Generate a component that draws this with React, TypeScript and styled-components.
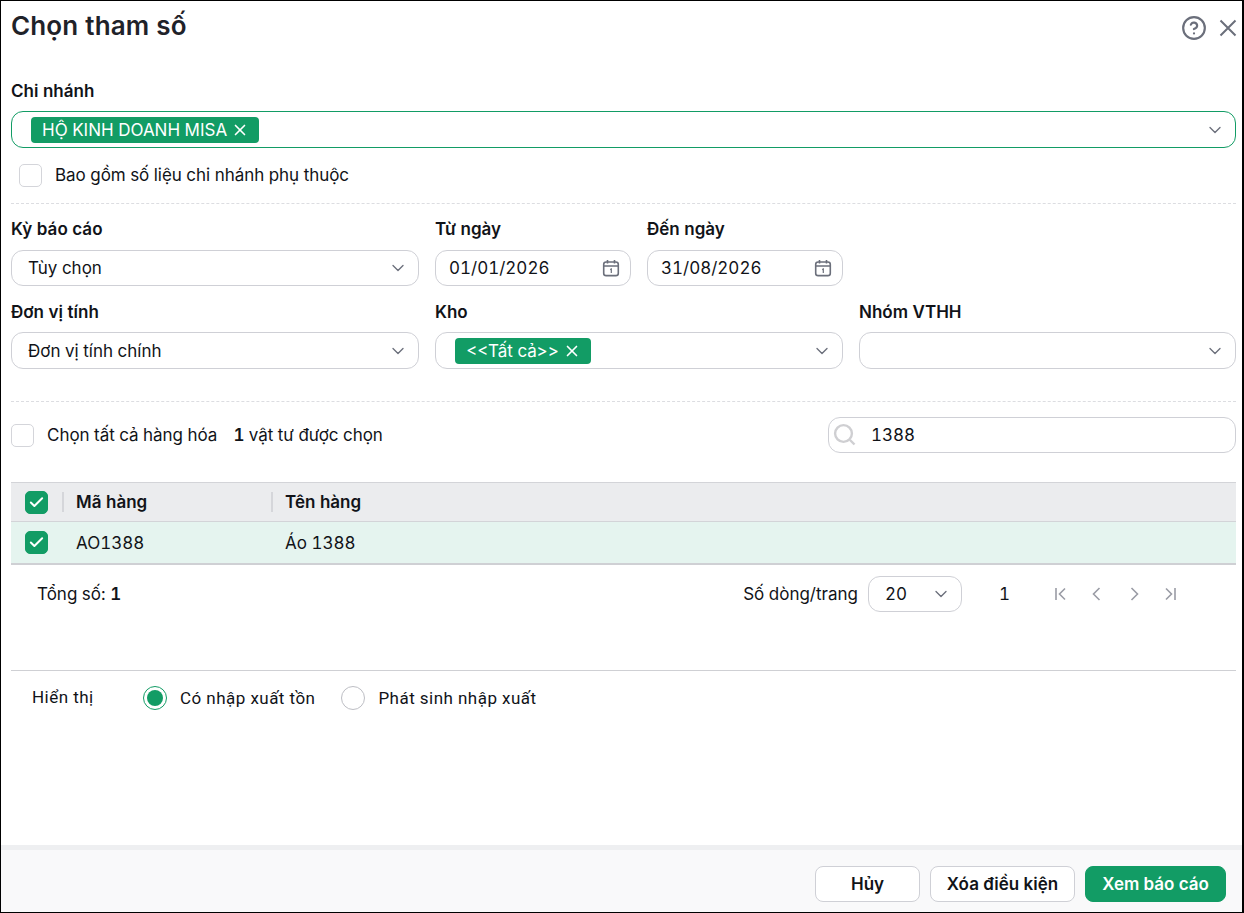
import React from "react"
import styled, { createGlobalStyle } from "styled-components"
import { Check, ChevronDown, CircleHelp, X } from "lucide-react"

const GREEN = "#129c65"

const GlobalStyle = createGlobalStyle`
html, body {
  margin: 0;
  padding: 0;
  background: #fff;
}
body {
  font-family: Inter, "Noto Sans", sans-serif;
  font-size: 17px;
  font-variant-numeric: tabular-nums;
  color: #111318;
}
* { box-sizing: border-box; }
`

const Dialog = styled.div`
  width: 1244px;
  height: 913px;
  display: flex;
  flex-direction: column;
  background: #fff;
  border-style: solid;
  border-color: #000;
  border-width: 1px 2px 1px 1px;
  overflow: hidden;
`

const Header = styled.header`
  height: 48px;
  display: flex;
  align-items: center;
  justify-content: space-between;
  padding: 2px 2px 0 10px;
  flex: none;
`

const Title = styled.h1`
  margin: 0;
  font-size: 26px;
  font-weight: 600;
  letter-spacing: 0.1px;
  color: #1f2229;
  line-height: 46px;
`

const HeaderIcons = styled.div`
  display: flex;
  align-items: center;
  gap: 9px;
  color: #6b6f7b;
  padding-top: 4px;
`

const Body = styled.main`
  flex: 1;
  padding: 0 6px 0 10px;
  display: flex;
  flex-direction: column;
`

const FieldLabel = styled.label<{ $gap?: number }>`
  display: block;
  font-size: 17px;
  font-weight: 600;
  line-height: 20px;
  height: 20px;
  margin-bottom: ${p => p.$gap ?? 10}px;
  color: #111318;
`

const BranchBlock = styled.section`
  padding-top: 32px;
`

const SelectBox = styled.div<{ $active?: boolean; $pad?: number; $h?: number }>`
  height: ${p => p.$h ?? 37}px;
  display: flex;
  align-items: center;
  justify-content: space-between;
  padding: 0 10px 0 ${p => p.$pad ?? 16}px;
  border: 1px solid ${p => (p.$active ? GREEN : "#cfd0d6")};
  border-radius: 12px;
  background: #fff;
  font-size: 17px;
  color: #6b6f7b;
`

const SelectValue = styled.span`
  color: #111318;
`

const Tag = styled.span`
  display: inline-flex;
  align-items: center;
  gap: 4px;
  height: 26px;
  padding: 0 10px 0 11px;
  background: ${GREEN};
  color: #fff;
  border-radius: 4px;
  font-size: 17px;
  white-space: nowrap;
`

const CheckRow = styled.div<{ $indent?: number }>`
  display: flex;
  align-items: center;
  gap: 13px;
  padding-left: ${p => p.$indent ?? 0}px;
  font-size: 17px;
  line-height: 24px;
  letter-spacing: -0.04px;
`

const BranchOption = styled(CheckRow)`
  margin: 15px 0 16px;
`

const CheckBox = styled.span<{ $checked?: boolean }>`
  width: 23px;
  height: 23px;
  flex: none;
  display: inline-flex;
  align-items: center;
  justify-content: center;
  border-radius: 5px;
  border: 1px solid ${p => (p.$checked ? GREEN : "#d4d5da")};
  background: ${p => (p.$checked ? GREEN : "#fff")};
  color: #fff;
`

const DashedLine = styled.hr`
  margin: 0;
  border: 0;
  border-top: 1px dashed #dcdde1;
`

const ParamGrid = styled.section`
  display: grid;
  grid-template-columns: 408px 408px 377px;
  column-gap: 16px;
  row-gap: 16px;
  padding: 15px 0 32px;
`

const DateGroup = styled.div`
  display: grid;
  grid-template-columns: 196px 196px;
  column-gap: 16px;
`

const DateInput = styled(SelectBox)`
  height: 36px;
  padding: 0 10px 0 13px;
`

const SelectRow = styled.section`
  display: flex;
  align-items: center;
  justify-content: space-between;
  margin: 15px 0 29px;
  height: 36px;
`

const SelectCount = styled.span`
  margin-left: 3px;
  strong { font-weight: 600; }
`

const SearchBox = styled.div`
  width: 408px;
  height: 36px;
  display: flex;
  align-items: center;
  gap: 14px;
  padding-left: 4px;
  border: 1px solid #cfd0d6;
  border-radius: 12px;
  font-size: 17px;
`

const Row = styled.div<{ $head?: boolean }>`
  display: grid;
  grid-template-columns: 65px 209px 1fr;
  align-items: center;
  height: ${p => (p.$head ? 39 : 44)}px;
  background: ${p => (p.$head ? "#ebecee" : "#e5f4ef")};
  border-top: 1px solid #d3d4d8;
  border-bottom: ${p => (p.$head ? "0" : "2px solid #cfd0d4")};
  font-weight: ${p => (p.$head ? 600 : 400)};
  font-size: 17px;
`

const Cell = styled.div<{ $divider?: boolean }>`
  height: 100%;
  display: flex;
  align-items: center;
  position: relative;
  ${p =>
    p.$divider &&
    `&::before {
      content: "";
      position: absolute;
      left: -14px;
      top: 9px;
      bottom: 9px;
      width: 2px;
      background: #d5d6da;
    }`}
`

const CheckCell = styled.div`
  height: 100%;
  display: flex;
  align-items: center;
  padding-left: 14px;
`

const Pager = styled.section`
  height: 58px;
  display: flex;
  align-items: center;
  padding: 0 56px 0 26px;
  font-size: 17px;
  strong { font-weight: 600; }
`

const PagerSize = styled.div`
  margin-left: auto;
  display: flex;
  align-items: center;
  gap: 10px;
`

const SizeSelect = styled.div`
  width: 94px;
  height: 36px;
  display: flex;
  align-items: center;
  justify-content: space-between;
  padding: 0 10px 0 16px;
  border: 1px solid #cfd0d6;
  border-radius: 12px;
  color: #6b6f7b;
`

const PageNum = styled.span`
  margin: 0 41px 0 37px;
`

const PagerIcons = styled.div`
  display: flex;
  align-items: center;
  gap: 19px;
  color: #9a9ca5;
`

const SolidLine = styled.hr`
  margin: 47px 0 0;
  border: 0;
  border-top: 1px solid #cfd0d4;
`

const DisplayRow = styled.section`
  display: flex;
  align-items: center;
  height: 54px;
  padding-left: 21px;
  font-family: Roboto, Inter, sans-serif;
  font-size: 17px;
  letter-spacing: 0.46px;
`

const DisplayLabel = styled.span`
  width: 111px;
  margin-top: -3px;
`

const Radio = styled.span<{ $on?: boolean }>`
  width: 24px;
  height: 24px;
  flex: none;
  border-radius: 50%;
  border: 1px solid ${p => (p.$on ? GREEN : "#bdbec4")};
  display: inline-flex;
  align-items: center;
  justify-content: center;
  margin-right: 13px;
  &::after {
    content: "";
    width: 16px;
    height: 16px;
    border-radius: 50%;
    background: ${p => (p.$on ? GREEN : "transparent")};
  }
`

const RadioText = styled.span`
  margin-right: 26px;
`

const Footer = styled.footer`
  height: 67px;
  flex: none;
  display: flex;
  justify-content: flex-end;
  gap: 10px;
  padding: 16px 16px 0 0;
  background: #f9f9fa;
  border-top: 5px solid #eeeff1;
`

const Button = styled.button<{ $primary?: boolean; $w: number }>`
  width: ${p => p.$w}px;
  height: 36px;
  border-radius: 8px;
  border: 1px solid ${p => (p.$primary ? GREEN : "#cfd0d6")};
  background: ${p => (p.$primary ? GREEN : "#fff")};
  color: ${p => (p.$primary ? "#fff" : "#111318")};
  font-family: inherit;
  font-size: 17px;
  font-weight: 600;
  padding: 0;
`

const PagerIcon = ({ d }: { d: string }) => (
  <svg width="18" height="18" viewBox="0 0 18 18" fill="none" stroke="currentColor" strokeWidth="1.6">
    <path d={d} />
  </svg>
)

const DateIcon = () => (
  <svg width="18" height="18" viewBox="0 0 18 18" fill="none" stroke="#6b6f7b" strokeWidth="1.6">
    <rect x="1.7" y="3" width="14.6" height="13.6" rx="2.4" />
    <path d="M1.7 7h14.6M5.5 1v3.4M12.5 1v3.4" />
    <path d="M8.2 10.6 9.3 10v4" strokeWidth="1.2" />
  </svg>
)

const SearchIcon = () => (
  <svg width="24" height="24" viewBox="0 0 24 24" fill="none" stroke="#cfcfd2" strokeWidth="2.4">
    <circle cx="10.5" cy="10.5" r="8.4" />
    <path d="M17 17l4.5 4.5" />
  </svg>
)

const CloseIcon = () => (
  <svg width="24" height="24" viewBox="0 0 24 24" fill="none" stroke="currentColor" strokeWidth="2">
    <path d="M4.5 4.5l15 15M19.5 4.5l-15 15" />
  </svg>
)

const Chevron = () => <ChevronDown size={20} strokeWidth={1.6} />

const TagClose = () => <X size={18} strokeWidth={2.2} />

const Tick = () => <Check size={17} strokeWidth={2.8} />

const App: React.FC = () => {
  return (
    <>
      <GlobalStyle />
      <Dialog>
        <Header>
          <Title>Chọn tham số</Title>
          <HeaderIcons>
            <CircleHelp size={26} strokeWidth={2} />
            <CloseIcon />
          </HeaderIcons>
        </Header>
        <Body>
          <BranchBlock>
            <FieldLabel>Chi nhánh</FieldLabel>
            <SelectBox $active $pad={19}>
              <Tag>
                HỘ KINH DOANH MISA
                <TagClose />
              </Tag>
              <Chevron />
            </SelectBox>
          </BranchBlock>
          <BranchOption $indent={8}>
            <CheckBox />
            Bao gồm số liệu chi nhánh phụ thuộc
          </BranchOption>
          <DashedLine />
          <ParamGrid>
            <div>
              <FieldLabel $gap={11}>Kỳ báo cáo</FieldLabel>
              <SelectBox $h={36}>
                <SelectValue>Tùy chọn</SelectValue>
                <Chevron />
              </SelectBox>
            </div>
            <DateGroup>
              <div>
                <FieldLabel $gap={11}>Từ ngày</FieldLabel>
                <DateInput>
                  <SelectValue>01/01/2026</SelectValue>
                  <DateIcon />
                </DateInput>
              </div>
              <div>
                <FieldLabel $gap={11}>Đến ngày</FieldLabel>
                <DateInput>
                  <SelectValue>31/08/2026</SelectValue>
                  <DateIcon />
                </DateInput>
              </div>
            </DateGroup>
            <div />
            <div>
              <FieldLabel>Đơn vị tính</FieldLabel>
              <SelectBox>
                <SelectValue>Đơn vị tính chính</SelectValue>
                <Chevron />
              </SelectBox>
            </div>
            <div>
              <FieldLabel>Kho</FieldLabel>
              <SelectBox $pad={19}>
                <Tag>
                  {"<<Tất cả>>"}
                  <TagClose />
                </Tag>
                <Chevron />
              </SelectBox>
            </div>
            <div>
              <FieldLabel>Nhóm VTHH</FieldLabel>
              <SelectBox>
                <span />
                <Chevron />
              </SelectBox>
            </div>
          </ParamGrid>
          <DashedLine />
          <SelectRow>
            <CheckRow>
              <CheckBox />
              Chọn tất cả hàng hóa
              <SelectCount>
                <strong>1</strong> vật tư được chọn
              </SelectCount>
            </CheckRow>
            <SearchBox>
              <SearchIcon />
              <SelectValue>1388</SelectValue>
            </SearchBox>
          </SelectRow>
          <Row $head>
            <CheckCell>
              <CheckBox $checked>
                <Tick />
              </CheckBox>
            </CheckCell>
            <Cell $divider>Mã hàng</Cell>
            <Cell $divider>Tên hàng</Cell>
          </Row>
          <Row>
            <CheckCell>
              <CheckBox $checked>
                <Tick />
              </CheckBox>
            </CheckCell>
            <Cell>AO1388</Cell>
            <Cell>Áo 1388</Cell>
          </Row>
          <Pager>
            <span>
              Tổng số: <strong>1</strong>
            </span>
            <PagerSize>
              Số dòng/trang
              <SizeSelect>
                <SelectValue>20</SelectValue>
                <Chevron />
              </SizeSelect>
            </PagerSize>
            <PageNum>1</PageNum>
            <PagerIcons>
              <PagerIcon d="M14 3.5 8.5 9 14 14.5M5 3v12" />
              <PagerIcon d="M11.5 3 5.5 9 11.5 15" />
              <PagerIcon d="M6.5 3 12.5 9 6.5 15" />
              <PagerIcon d="M4 3.5 9.5 9 4 14.5M13 3v12" />
            </PagerIcons>
          </Pager>
          <SolidLine />
          <DisplayRow>
            <DisplayLabel>Hiển thị</DisplayLabel>
            <Radio $on />
            <RadioText>Có nhập xuất tồn</RadioText>
            <Radio />
            <RadioText>Phát sinh nhập xuất</RadioText>
          </DisplayRow>
        </Body>
        <Footer>
          <Button $w={105}>Hủy</Button>
          <Button $w={145}>Xóa điều kiện</Button>
          <Button $w={141} $primary>Xem báo cáo</Button>
        </Footer>
      </Dialog>
    </>
  )
}

export default App
